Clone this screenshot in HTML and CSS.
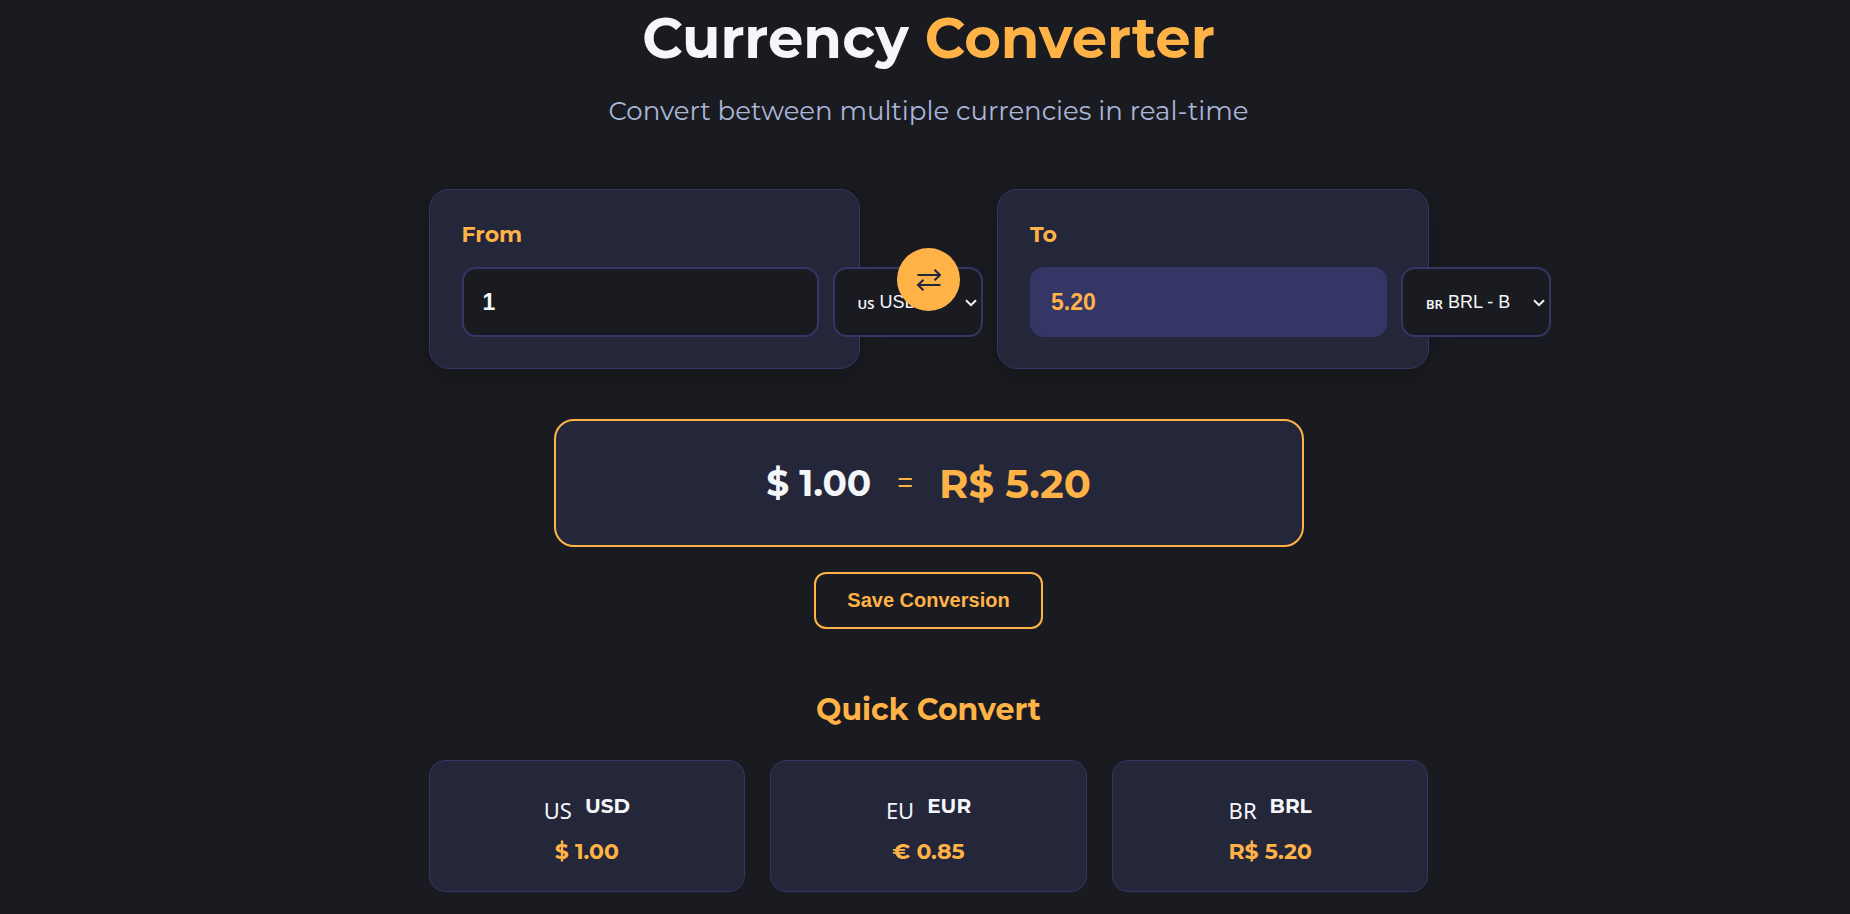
FILE: index.html
```html
<!DOCTYPE html>
<html lang="en">
<head>
<meta charset="utf-8">
<title>Currency Converter</title>
<link rel="stylesheet" href="styles.css">
</head>
<body>
<main class="page">
  <header class="header">
    <h1 class="title">Currency <span class="accent">Converter</span></h1>
    <p class="subtitle">Convert between multiple currencies in real-time</p>
  </header>

  <section class="converter" aria-label="Converter">
    <div class="card">
      <label class="card-label" for="from-amount">From</label>
      <div class="fields">
        <input class="amount" id="from-amount" type="text" inputmode="decimal" value="1">
        <div class="picker">
          <select class="currency" aria-label="From currency">
            <option>USD - US Dollar</option>
            <option>EUR - Euro</option>
            <option>BRL - Brazilian Real</option>
          </select>
          <span class="picker-flag">US</span>
          <svg class="chevron" viewBox="0 0 12 8" fill="none" stroke="currentColor" stroke-width="2" aria-hidden="true"><path d="M1 1.2L6 6.2L11 1.2"/></svg>
        </div>
      </div>
    </div>
    <button class="swap" type="button" aria-label="Swap currencies">
      <svg class="swap-icon" viewBox="0 0 24 24" fill="none" stroke="currentColor" stroke-width="2">
        <path d="M0.5 7H23M17.5 1.8L23 7L17.5 12.2M23.5 17H1M6.5 11.8L1 17L6.5 22.2"/>
      </svg>
    </button>
    <div class="card">
      <label class="card-label" for="to-amount">To</label>
      <div class="fields">
        <input class="amount amount-result" id="to-amount" type="text" value="5.20" readonly>
        <div class="picker">
          <select class="currency" aria-label="To currency">
            <option>BRL - Brazilian Real</option>
            <option>USD - US Dollar</option>
            <option>EUR - Euro</option>
          </select>
          <span class="picker-flag">BR</span>
          <svg class="chevron" viewBox="0 0 12 8" fill="none" stroke="currentColor" stroke-width="2" aria-hidden="true"><path d="M1 1.2L6 6.2L11 1.2"/></svg>
        </div>
      </div>
    </div>
  </section>

  <section class="result" aria-label="Result">
    <span class="result-from">$ 1.00</span>
    <span class="result-equals">=</span>
    <span class="result-to">R$ 5.20</span>
  </section>
  <button class="save" type="button">Save Conversion</button>

  <section class="quick">
    <h2 class="quick-title">Quick Convert</h2>
    <div class="quick-grid">
      <article class="quick-card">
        <div class="quick-head"><span class="flag">US</span><span class="code">USD</span></div>
        <div class="price">$ 1.00</div>
      </article>
      <article class="quick-card">
        <div class="quick-head"><span class="flag">EU</span><span class="code">EUR</span></div>
        <div class="price">€ 0.85</div>
      </article>
      <article class="quick-card">
        <div class="quick-head"><span class="flag">BR</span><span class="code">BRL</span></div>
        <div class="price">R$ 5.20</div>
      </article>
    </div>
  </section>
</main>
</body>
</html>
```
FILE: styles.css
```css
:root {
  --bg: #1a1b20;
  --card: #24263a;
  --line: #353665;
  --accent: #ffb347;
  --text: #f5f6fa;
  --muted: #a9b6d8;
}

* {
  box-sizing: border-box;
}

body {
  margin: 0;
  padding-left: 7px;
  background: var(--bg);
  color: var(--text);
  font-family: Montserrat, Inter, sans-serif;
  overflow: hidden;
}

.page {
  max-width: 1000px;
  margin: 0 auto;
  padding-bottom: 23px;
}

.header {
  padding-top: 4px;
  text-align: center;
}

.title {
  margin: 0;
  font-size: 56px;
  font-weight: 700;
  line-height: 68px;
}

.accent {
  color: var(--accent);
}

.subtitle {
  margin: 21px 0 0;
  color: var(--muted);
  font-size: 26px;
  font-weight: 400;
  line-height: 36px;
}

.converter {
  display: grid;
  grid-template-columns: minmax(0, 1fr) 65px minmax(0, 1fr);
  gap: 36px;
  margin-top: 60px;
}

.card {
  padding: 32px 32px 31px;
  background: var(--card);
  border: 1px solid var(--line);
  border-radius: 20px;
  box-shadow: 0 8px 32px rgba(0, 0, 0, 0.2);
}

.card-label {
  display: block;
  margin-bottom: 19px;
  color: var(--accent);
  font-size: 22px;
  font-weight: 700;
  line-height: 26px;
}

.fields {
  display: flex;
  gap: 14px;
}

.amount,
.currency {
  height: 70px;
  padding: 0 19px;
  background: var(--bg);
  border: 2px solid var(--line);
  border-radius: 14px;
  color: var(--text);
  font-family: "Liberation Sans", Arial, sans-serif;
}

.amount {
  flex: 1 0 357px;
  width: 357px;
  font-size: 23px;
  font-weight: 700;
}

.amount-result {
  background: var(--line);
  color: var(--accent);
}

.picker {
  position: relative;
  flex: none;
  width: 150px;
}

.currency {
  width: 100%;
  padding: 0 39px 0 45px;
  appearance: none;
  font-size: 18px;
}

.picker-flag {
  position: absolute;
  top: 28px;
  left: 25px;
  font-family: "Noto Sans", sans-serif;
  font-size: 13px;
  font-weight: 600;
  line-height: 18px;
  pointer-events: none;
}

.chevron {
  position: absolute;
  top: 32px;
  right: 6px;
  width: 12px;
  height: 8px;
  pointer-events: none;
}

.swap {
  position: relative;
  z-index: 1;
  display: flex;
  align-items: center;
  justify-content: center;
  justify-self: center;
  width: 63px;
  height: 63px;
  margin-top: 59px;
  padding: 0;
  background: var(--accent);
  border: 0;
  border-radius: 50%;
  color: var(--card);
}

.swap-icon {
  width: 24px;
  height: 24px;
}

.result {
  display: flex;
  align-items: center;
  justify-content: center;
  gap: 26px;
  max-width: 750px;
  min-height: 128px;
  margin: 50px auto 0;
  background: var(--card);
  border: 2px solid var(--accent);
  border-radius: 20px;
}

.result-from {
  font-size: 36px;
  font-weight: 700;
}

.result-equals {
  color: var(--accent);
  font-family: "Liberation Sans", Arial, sans-serif;
  font-size: 27px;
}

.result-to {
  color: var(--accent);
  font-size: 40px;
  font-weight: 700;
}

.save {
  display: block;
  margin: 25px auto 0;
  padding: 15px 31px;
  background: transparent;
  border: 2px solid var(--accent);
  border-radius: 12px;
  color: var(--accent);
  font-family: "Liberation Sans", Arial, sans-serif;
  font-size: 20px;
  font-weight: 700;
}

.quick {
  margin-top: 61px;
}

.quick-title {
  margin: 0 0 30px;
  color: var(--accent);
  font-size: 30px;
  font-weight: 700;
  line-height: 40px;
  text-align: center;
}

.quick-grid {
  display: grid;
  grid-template-columns: repeat(3, 1fr);
  gap: 25px;
}

.quick-card {
  padding: 30px 24px 24px;
  background: var(--card);
  border: 1px solid var(--line);
  border-radius: 16px;
  text-align: center;
}

.quick-head {
  display: flex;
  justify-content: center;
  gap: 13px;
}

.flag {
  font-family: "Noto Sans", sans-serif;
  font-size: 22px;
  line-height: 38px;
}

.code {
  font-size: 20px;
  font-weight: 700;
  line-height: 30px;
}

.price {
  margin-top: 8px;
  color: var(--accent);
  font-size: 22px;
  font-weight: 700;
  line-height: 30px;
}
```
